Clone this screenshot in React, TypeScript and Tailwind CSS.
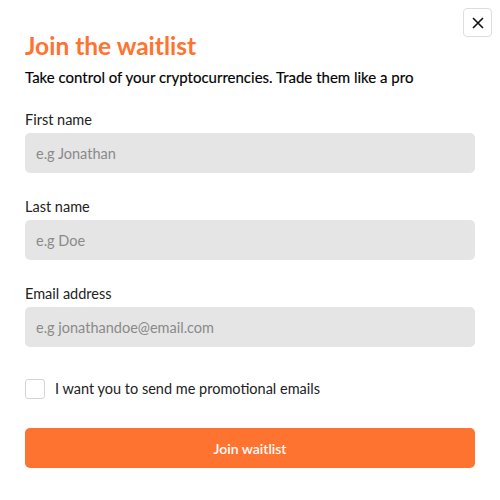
import React from 'react'

const fields = [
  { label: 'First name', placeholder: 'e.g Jonathan' },
  { label: 'Last name', placeholder: 'e.g Doe' },
  { label: 'Email address', placeholder: 'e.g jonathandoe@email.com' },
]

const App: React.FC = () => {
  return (
    <div className="relative h-[500px] w-[500px] bg-white font-['Lato',sans-serif] text-[#1a1a1a]">
      <button className="absolute right-2 top-2 flex h-[29px] w-[29px] items-center justify-center rounded border border-[#dddddd] bg-white">
        <svg width="14" height="14" viewBox="0 0 14 14" fill="none" stroke="#111" strokeWidth="1.6">
          <path d="M2 2l10 10M12 2L2 12" />
        </svg>
      </button>

      <div className="px-[25px] pt-[31px]">
        <h1 className="text-[24.5px] font-bold leading-[30px] text-[#ff7330]">Join the waitlist</h1>
        <p className="mt-[6px] text-[15px] font-normal leading-[20px] text-black [-webkit-text-stroke:0.15px_black]">
          Take control of your cryptocurrencies. Trade them like a pro
        </p>

        <form className="mt-[23px] flex flex-col gap-[24px]">
          {fields.map((f) => (
            <label key={f.label} className="flex flex-col">
              <span className="mb-[3px] text-[14.5px] leading-[20px] text-[#222]">{f.label}</span>
              <input
                placeholder={f.placeholder}
                className="h-[40px] w-full rounded-[5px] bg-[#e5e5e5] px-[11px] text-[14.5px] outline-none placeholder:text-[#8a8a8a]"
              />
            </label>
          ))}
        </form>

        <label className="mt-[32px] flex items-center gap-[10px]">
          <span className="h-[20px] w-[20px] rounded-[3px] border border-[#d4d4d4] bg-white" />
          <span className="text-[14.5px] leading-[20px] text-[#222]">I want you to send me promotional emails</span>
        </label>

        <button className="mt-[29px] h-[40px] w-full rounded-[5px] bg-[#ff7330] text-[14px] font-semibold text-white">
          Join waitlist
        </button>
      </div>
    </div>
  )
}

export default App
